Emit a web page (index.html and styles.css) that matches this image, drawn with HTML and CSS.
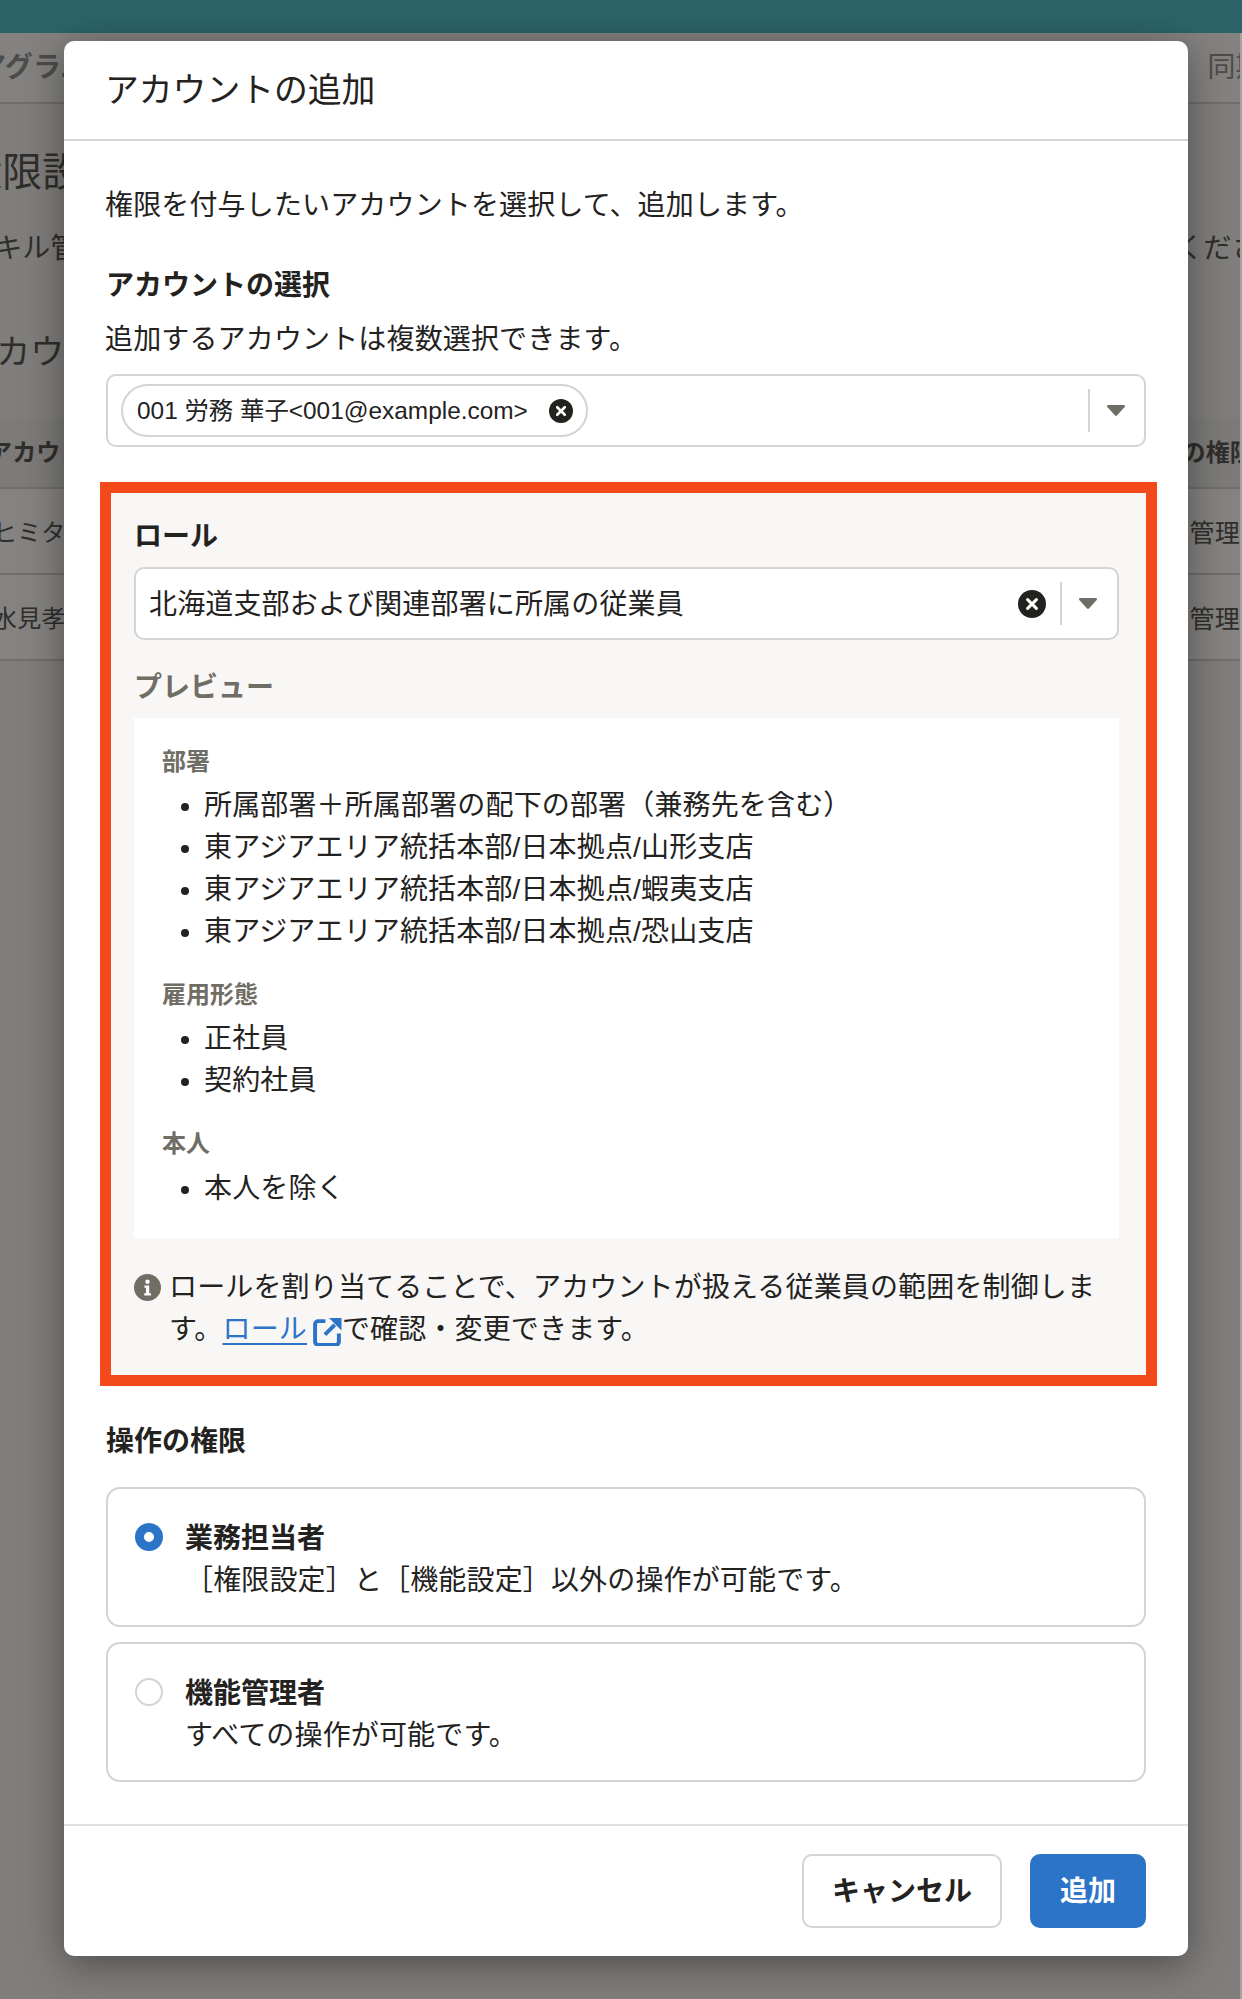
FILE: index.html
```html
<!DOCTYPE html>
<html lang="ja">
<head>
  <meta charset="UTF-8" />
  <title>アカウントの追加</title>
  <link rel="stylesheet" href="styles.css">
</head>
<body>
  <!-- dimmed page behind the dialog -->
  <div class="page">
    <div class="topbar"></div>
    <div class="tabs">
      <span class="tab-left">アグラム</span>
      <span class="tab-right">同期設定</span>
    </div>
    <h1 class="page-title">権限設定</h1>
    <div class="page-desc">
      <span class="page-desc-left">スキル管理</span>
      <span class="page-desc-right">ください</span>
    </div>
    <h2 class="page-section">アカウント</h2>
    <div class="table-row table-head">
      <span class="cell-left">アカウント</span>
      <span class="cell-right">の権限</span>
    </div>
    <div class="table-row">
      <span class="cell-left">ヒミタ</span>
      <span class="cell-right">管理者</span>
    </div>
    <div class="table-row">
      <span class="cell-left">水見孝</span>
      <span class="cell-right">管理者</span>
    </div>
  </div>
  <div class="scroll-edge"></div>

  <div class="dialog">
    <div class="dialog-header">アカウントの追加</div>

    <div class="dialog-body">
      <p class="intro">権限を付与したいアカウントを選択して、追加します。</p>

      <div class="field-title account-title">アカウントの選択</div>
      <p class="field-help">追加するアカウントは複数選択できます。</p>
      <div class="combo">
        <div class="combo-main">
          <span class="chip">
            <span class="chip-label">001 労務 華子&lt;001@example.com&gt;</span>
            <svg class="clear-icon chip-clear" viewBox="0 0 28 28"><circle cx="14" cy="14" r="14" fill="#23221e"/><path d="M9.600 9.600l8.800 8.800M18.400 9.600l-8.800 8.800" stroke="#fff" stroke-width="3" stroke-linecap="round"/></svg>
          </span>
        </div>
        <span class="combo-sep"></span>
        <svg class="caret" viewBox="0 0 18 11"><path d="M1.200 0h15.600c1 0 1.500 1.100.9 1.900l-7.800 8.600c-.5.6-1.300.6-1.800 0L.3 1.900C-.3 1.100.2 0 1.200 0z" fill="#706d65"/></svg>
      </div>

      <div class="role-panel">
        <div class="field-title">ロール</div>
        <div class="combo role-combo">
          <div class="combo-main">
            <span class="role-value">北海道支部および関連部署に所属の従業員</span>
          </div>
          <svg class="clear-icon" viewBox="0 0 28 28"><circle cx="14" cy="14" r="14" fill="#23221e"/><path d="M9.600 9.600l8.800 8.800M18.400 9.600l-8.800 8.800" stroke="#fff" stroke-width="3" stroke-linecap="round"/></svg>
          <span class="combo-sep"></span>
          <svg class="caret" viewBox="0 0 18 11"><path d="M1.200 0h15.600c1 0 1.500 1.100.9 1.900l-7.800 8.600c-.5.6-1.300.6-1.800 0L.3 1.900C-.3 1.100.2 0 1.200 0z" fill="#706d65"/></svg>
        </div>

        <div class="preview-title">プレビュー</div>
        <div class="preview">
          <div class="preview-label">部署</div>
          <ul class="preview-list">
            <li>所属部署＋所属部署の配下の部署（兼務先を含む）</li>
            <li>東アジアエリア統括本部/日本拠点/山形支店</li>
            <li>東アジアエリア統括本部/日本拠点/蝦夷支店</li>
            <li>東アジアエリア統括本部/日本拠点/恐山支店</li>
          </ul>
          <div class="preview-label">雇用形態</div>
          <ul class="preview-list">
            <li>正社員</li>
            <li>契約社員</li>
          </ul>
          <div class="preview-label">本人</div>
          <ul class="preview-list">
            <li>本人を除く</li>
          </ul>
        </div>

        <div class="note">
          <svg class="note-icon" viewBox="0 0 28 28">
            <circle cx="14" cy="14" r="14" fill="#706d65"/>
            <circle cx="14" cy="8" r="2.300" fill="#fff"/>
            <path d="M10.800 12h5v8h1.800v2.300h-7V20h1.800v-5.700h-1.600z" fill="#fff"/>
          </svg>
          <p class="note-text">ロールを割り当てることで、アカウントが扱える従業員の範囲を制御します。<a class="note-link" href="#">ロール<svg class="link-icon" viewBox="0 0 28 28"><path d="M12 4H5A3 3 0 0 0 2 7v17a3 3 0 0 0 3 3h17a3 3 0 0 0 3-3v-8" fill="none" stroke="#2b74c7" stroke-width="3.800"/><path d="M11.500 17L21 7.500" stroke="#2b74c7" stroke-width="3.800"/><path d="M15.500 1H27.500v12z" fill="#2b74c7"/></svg></a>で確認・変更できます。</p>
        </div>
      </div>

      <div class="field-title perm-title">操作の権限</div>
      <div class="radio-panel">
        <span class="radio radio-on"></span>
        <div>
          <div class="radio-title">業務担当者</div>
          <div class="radio-desc">［権限設定］と［機能設定］以外の操作が可能です。</div>
        </div>
      </div>
      <div class="radio-panel">
        <span class="radio"></span>
        <div>
          <div class="radio-title">機能管理者</div>
          <div class="radio-desc">すべての操作が可能です。</div>
        </div>
      </div>
    </div>

    <div class="dialog-footer">
      <button class="btn btn-secondary">キャンセル</button>
      <button class="btn btn-primary">追加</button>
    </div>
  </div>
</body>
</html>
```

FILE: styles.css
```css
html, body {
  margin: 0;
  padding: 0;
  height: 100%;
  overflow: hidden;
  background: #7f7e7c;
}

body {
  font-family: "Liberation Sans", "Noto Sans CJK JP", sans-serif;
  font-size: 28px;
  line-height: 42px;
  letter-spacing: 0.15px;
  color: #23221e;
}

p, h1, h2, ul {
  margin: 0;
  padding: 0;
}

/* Page behind the dialog */
.page {
  color: #2f2e2b;
}

.topbar {
  height: 33px;
  background: #2b6468;
}

.tabs {
  display: flex;
  justify-content: space-between;
  align-items: center;
  height: 69px;
  background: #838280;
  border-bottom: 2px solid #6f6e6c;
  color: #4d4c4a;
}

.tab-left {
  margin-left: -22px;
  font-weight: 700;
}

.tab-right {
  margin-right: -78px;
}

.page-title {
  margin: 38px 0 0 -38px;
  font-size: 40px;
  line-height: 60px;
  font-weight: 400;
}

.page-desc {
  display: flex;
  justify-content: space-between;
  margin-top: 26px;
}

.page-desc-left {
  margin-left: -34px;
}

.page-desc-right {
  margin-right: -46px;
}

.page-section {
  margin: 57px 0 41px -38px;
  font-size: 34px;
  line-height: 50px;
  font-weight: 400;
}

.table-row {
  display: flex;
  justify-content: space-between;
  align-items: center;
  box-sizing: border-box;
  height: 86px;
  padding-top: 3px;
  background: #848381;
  border-bottom: 2px solid #6f6e6c;
  font-size: 24px;
}

.table-head {
  height: 71px;
  padding-top: 0;
  font-weight: 700;
  background: #7c7b79;
}

.cell-left {
  margin-left: -7px;
}

.cell-right {
  margin-right: -23px;
  font-size: 25px;
}

.table-head .cell-left {
  margin-left: -12px;
}

.table-head .cell-right {
  margin-right: -12px;
  font-size: 24px;
}

.scroll-edge {
  position: absolute;
  top: 33px;
  right: 0;
  bottom: 0;
  width: 2px;
  background: #a5a4a2;
}

/* Dialog */
.dialog {
  position: absolute;
  top: 41px;
  left: 64px;
  width: 1124px;
  background: #fff;
  border-radius: 10px;
  box-shadow: 0 8px 40px rgba(0, 0, 0, 0.4);
}

.dialog-header {
  height: 98px;
  padding: 0 41px;
  border-bottom: 2px solid #d6d3d0;
  font-size: 33.800px;
  line-height: 98px;
  letter-spacing: 0;
}

.dialog-body {
  padding: 44px 42px 42px;
}

.intro, .field-help {
  margin-left: -1px;
}

.field-title {
  font-weight: 700;
  letter-spacing: 0;
}

.account-title {
  margin-top: 38px;
}

.field-help {
  margin-top: 12px;
  margin-bottom: 13px;
}

.combo {
  display: flex;
  align-items: center;
  box-sizing: border-box;
  height: 73px;
  padding: 0 19px 0 13px;
  background: #fff;
  border: 2px solid #d6d3d0;
  border-radius: 10px;
}

.combo-main {
  flex: 1;
  display: flex;
  align-items: center;
}

.chip {
  display: flex;
  align-items: center;
  box-sizing: border-box;
  height: 53px;
  padding: 0 13px 0 14px;
  border: 2px solid #d6d3d0;
  border-radius: 27px;
  font-size: 24.400px;
  letter-spacing: 0;
}

.chip-label {
  margin-right: 21px;
}

.clear-icon {
  width: 28px;
  height: 28px;
}

.chip-clear {
  width: 24px;
  height: 24px;
}

.combo-sep {
  width: 2px;
  height: 43px;
  margin: 0 17px 0 0;
  background: #d6d3d0;
}

.caret {
  width: 18px;
  height: 11px;
}

/* Highlighted role block */
.role-panel {
  margin: 35px -11px 0 -6px;
  padding: 23px 27px 24px 23px;
  background: #f8f7f6;
  border: 11px solid #f4491a;
}

.role-combo {
  margin-top: 9px;
  padding: 0 20px 0 13px;
}

.role-value {
  padding-top: 2px;
}

.role-combo .clear-icon {
  margin-right: 14px;
}

.preview-title {
  margin-top: 27px;
  font-weight: 700;
  letter-spacing: 0;
  color: #706d65;
}

.preview {
  margin-top: 9px;
  padding: 26px 28px 28px;
  background: #fff;
}

.preview-label {
  font-size: 24px;
  line-height: 36px;
  font-weight: 700;
  letter-spacing: 0;
  color: #706d65;
}

.preview-list {
  margin: 5px 0 24px;
  padding-left: 42px;
}

.preview-list:last-child {
  margin: 6px 0 0;
}

.note {
  display: flex;
  gap: 8px;
  margin-top: 29px;
}

.note-icon {
  flex: none;
  width: 27px;
  height: 27px;
  margin-top: 7px;
}

.note-link {
  color: #2b74c7;
  text-decoration: underline;
  text-underline-offset: 4px;
}

.link-icon {
  width: 29px;
  height: 29px;
  margin-left: 6px;
  vertical-align: -7px;
}

.perm-title {
  margin-top: 35px;
}

.radio-panel {
  display: flex;
  gap: 22px;
  box-sizing: border-box;
  height: 140px;
  margin-top: 24px;
  padding: 29px 27px 0;
  border: 2px solid #d6d3d0;
  border-radius: 14px;
}

.radio-panel + .radio-panel {
  margin-top: 15px;
}

.radio {
  flex: none;
  box-sizing: border-box;
  width: 28px;
  height: 28px;
  margin-top: 5px;
  background: #fff;
  border: 2px solid #d6d3d0;
  border-radius: 50%;
}

.radio-on {
  border: 9px solid #2b74c7;
}

.radio-title {
  font-weight: 700;
  letter-spacing: 0;
}

.dialog-footer {
  display: flex;
  justify-content: flex-end;
  gap: 28px;
  padding: 28px 42px;
  border-top: 2px solid #e1dfdc;
}

.btn {
  box-sizing: border-box;
  height: 74px;
  padding: 0 28px 4px;
  font-family: inherit;
  font-size: 28px;
  font-weight: 700;
  border-radius: 10px;
}

.btn-secondary {
  background: #fff;
  color: #23221e;
  border: 2px solid #d6d3d0;
}

.btn-primary {
  background: #2b74c7;
  color: #fff;
  border: 2px solid #2b74c7;
}
```
